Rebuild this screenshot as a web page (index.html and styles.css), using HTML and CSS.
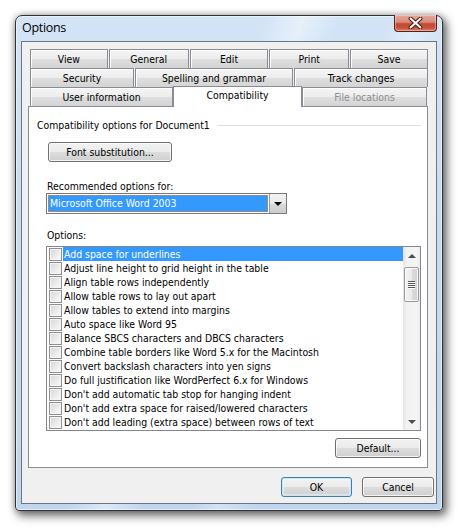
FILE: index.html
```html
<!DOCTYPE html>
<html>
<head>
<meta charset="utf-8">
<link rel="stylesheet" href="styles.css">
</head>
<body>
<div class="window">
  <div class="titlebar">
    <span class="title">Options</span>
    <div class="close">
      <svg width="17" height="12" viewBox="0 0 17 12">
        <path d="M3.5 1.5 L13.5 10.5 M13.5 1.5 L3.5 10.5" stroke="#4a1a14" stroke-width="4" stroke-linecap="round" fill="none"/>
        <path d="M3.5 1.5 L13.5 10.5 M13.5 1.5 L3.5 10.5" stroke="#ffffff" stroke-width="2" stroke-linecap="round" fill="none"/>
      </svg>
    </div>
  </div>
  <div class="client">
    <div class="tabs">
      <div class="tabrow">
        <div class="tab t-view">View</div>
        <div class="tab t-general">General</div>
        <div class="tab t-edit">Edit</div>
        <div class="tab t-print">Print</div>
        <div class="tab t-save">Save</div>
      </div>
      <div class="tabrow">
        <div class="tab t-security">Security</div>
        <div class="tab t-spelling">Spelling and grammar</div>
        <div class="tab t-track">Track changes</div>
      </div>
      <div class="tabrow">
        <div class="tab t-user">User information</div>
        <div class="tab t-compat active">Compatibility</div>
        <div class="tab t-files disabled">File locations</div>
      </div>
    </div>
    <div class="panel">
      <div class="group">
        <span class="group-label">Compatibility options for Document1</span>
        <span class="rule"></span>
      </div>
      <button class="btn btn-font">Font substitution...</button>
      <div class="label label-rec">Recommended options for:</div>
      <div class="combo">
        <div class="combo-field"><span class="combo-sel">Microsoft Office Word 2003</span></div>
        <div class="combo-btn"><span class="tri-down"></span></div>
      </div>
      <div class="label label-opt">Options:</div>
      <div class="list">
        <div class="items">
          <div class="item selected"><span class="check"></span><span class="txt">Add space for underlines</span></div>
          <div class="item"><span class="check"></span><span class="txt">Adjust line height to grid height in the table</span></div>
          <div class="item"><span class="check"></span><span class="txt">Align table rows independently</span></div>
          <div class="item"><span class="check"></span><span class="txt">Allow table rows to lay out apart</span></div>
          <div class="item"><span class="check"></span><span class="txt">Allow tables to extend into margins</span></div>
          <div class="item"><span class="check"></span><span class="txt">Auto space like Word 95</span></div>
          <div class="item"><span class="check"></span><span class="txt">Balance SBCS characters and DBCS characters</span></div>
          <div class="item"><span class="check"></span><span class="txt">Combine table borders like Word 5.x for the Macintosh</span></div>
          <div class="item"><span class="check"></span><span class="txt">Convert backslash characters into yen signs</span></div>
          <div class="item"><span class="check"></span><span class="txt">Do full justification like WordPerfect 6.x for Windows</span></div>
          <div class="item"><span class="check"></span><span class="txt">Don't add automatic tab stop for hanging indent</span></div>
          <div class="item"><span class="check"></span><span class="txt">Don't add extra space for raised/lowered characters</span></div>
          <div class="item"><span class="check"></span><span class="txt">Don't add leading (extra space) between rows of text</span></div>
        </div>
        <div class="scrollbar">
          <div class="sb-arrow"><span class="sb-up"></span></div>
          <div class="sb-track">
            <div class="sb-thumb"><span class="grip"></span><span class="grip"></span><span class="grip"></span><span class="grip"></span></div>
          </div>
          <div class="sb-arrow"><span class="sb-down"></span></div>
        </div>
      </div>
      <div class="default-row"><button class="btn btn-default">Default...</button></div>
    </div>
    <div class="footer">
      <button class="btn btn-ok">OK</button>
      <button class="btn btn-cancel">Cancel</button>
    </div>
  </div>
</div>
</body>
</html>
```

FILE: styles.css
```css
html, body {
  margin: 0;
  padding: 0;
  background: #ffffff;
}
body {
  font-family: "DejaVu Sans Condensed", "Liberation Sans", Arial, sans-serif;
  font-size: 10.4px;
  color: #000;
  width: 462px;
  height: 530px;
  overflow: hidden;
}
.window {
  margin: 15px 0 0 15px;
  width: 428px;
  height: 496px;
  box-sizing: border-box;
  border: 1px solid #2f3338;
  border-radius: 7px 7px 4px 4px;
  background:
    linear-gradient(112deg, rgba(255,255,255,0) 0%, rgba(255,255,255,0) 40%, rgba(255,255,255,.45) 46%, rgba(255,255,255,0) 52%, rgba(255,255,255,0) 60%, rgba(255,255,255,.3) 64%, rgba(255,255,255,0) 70%),
    linear-gradient(180deg, #d3e4f7 0%, #c8dcf1 40%, #c0d6ee 100%);
  box-shadow: 3px 4px 10px 1px rgba(0,0,0,0.55), 0 0 6px rgba(0,0,0,0.25), inset 0 0 0 1px rgba(255,255,255,0.55);
  padding: 0 5px 6px 5px;
  display: flex;
  flex-direction: column;
}
.titlebar {
  height: 25px;
  display: flex;
  align-items: flex-start;
  justify-content: space-between;
}
.title {
  font-family: "Open Sans", "Noto Sans", sans-serif;
  font-size: 12.5px;
  letter-spacing: -0.3px;
  color: #000;
  margin: 3px 0 0 1px;
  line-height: 17px;
}
.close {
  margin-top: -1px;
  width: 43px;
  height: 17px;
  box-sizing: border-box;
  border: 1px solid #5b1f18;
  border-top: none;
  border-radius: 0 0 4px 4px;
  background: linear-gradient(180deg, #e6a89b 0%, #d98b79 45%, #c24a33 55%, #c8523a 80%, #d9836c 100%);
  box-shadow: inset 0 0 0 1px rgba(255,255,255,0.35);
  display: flex;
  align-items: center;
  justify-content: center;
}
.close svg { display: block; }
.client {
  height: 463px;
  box-sizing: border-box;
  border: 1px solid #6d7580;
  background: #f0f0f0;
  padding: 7px 0 0 6px;
  display: flex;
  flex-direction: column;
}
.tabs {
  width: 400px;
  display: flex;
  flex-direction: column;
  position: relative;
  z-index: 2;
}
.tabrow {
  height: 19px;
  display: flex;
  align-items: flex-end;
  padding-left: 2px;
}
.tab {
  box-sizing: border-box;
  height: 19px;
  border: 1px solid #898c95;
  border-bottom: none;
  background: linear-gradient(180deg, #f5f5f5 0%, #ececec 50%, #dedede 51%, #d4d4d4 100%);
  box-shadow: inset 1px 1px 0 #ffffff;
  text-align: center;
  line-height: 18px;
  margin-right: 1px;
  white-space: nowrap;
}
.tab:last-child { margin-right: 0; }
.t-view { width: 78px; }
.t-general { width: 80px; }
.t-edit { width: 79px; }
.t-print { width: 80px; }
.t-save { width: 78px; }
.t-security { width: 104px; }
.t-spelling { width: 158px; }
.t-track { width: 134px; }
.t-user { width: 143px; margin-right: 0; }
.t-compat {
  width: 129px;
  margin-right: 0;
}
.t-files { width: 125px; }
.tab.active {
  height: 21px;
  margin-bottom: -1px;
  background: #ffffff;
  box-shadow: none;
  line-height: 17px;
  position: relative;
  z-index: 3;
}
.tab.disabled { color: #8d8d8d; }
.panel {
  width: 400px;
  height: 362px;
  box-sizing: border-box;
  border: 1px solid #898c95;
  background: #ffffff;
  padding: 0 6px 0 8px;
  display: flex;
  flex-direction: column;
  align-items: flex-start;
}
.group {
  margin-top: 12px;
  width: 100%;
  display: flex;
  align-items: center;
  height: 13px;
  line-height: 13px;
}
.group-label { white-space: nowrap; }
.rule {
  flex: 1;
  height: 1px;
  background: #d5dfe5;
  margin-left: 8px;
  margin-top: -1px;
}
.btn {
  font-family: inherit;
  font-size: 10.4px;
  color: #000;
  box-sizing: border-box;
  height: 20px;
  padding: 0;
  border: 1px solid #707070;
  border-radius: 3px;
  background: linear-gradient(180deg, #f2f2f2 0%, #ebebeb 50%, #dddddd 51%, #cfcfcf 100%);
  box-shadow: inset 0 0 0 1px rgba(255,255,255,0.75);
  line-height: 17px;
  text-align: center;
}
.btn-font {
  margin: 10px 0 0 11px;
  width: 124px;
}
.label {
  line-height: 13px;
  margin-left: 10px;
}
.label-rec { margin-top: 18px; }
.label-opt { margin-top: 15px; }
.combo {
  margin-left: 9px;
  width: 241px;
  height: 21px;
  box-sizing: border-box;
  border: 1px solid #7a7a7a;
  background: #fff;
  display: flex;
}
.combo-field {
  flex: 1;
  padding: 1px;
  display: flex;
}
.combo-sel {
  flex: 1;
  background: #3399ff;
  color: #fff;
  outline: 1px dotted #e8851c;
  outline-offset: -1px;
  line-height: 17px;
  padding-left: 2px;
}
.combo-btn {
  width: 17px;
  box-sizing: border-box;
  border-left: 1px solid #9a9a9a;
  background: linear-gradient(180deg, #f3f3f3 0%, #e8e8e8 50%, #d9d9d9 51%, #cdcdcd 100%);
  display: flex;
  align-items: center;
  justify-content: center;
}
.tri-down {
  width: 0;
  height: 0;
  border-left: 4px solid transparent;
  border-right: 4px solid transparent;
  border-top: 4px solid #000;
  margin-top: 1px;
}
.list {
  margin: 4px 0 0 9px;
  width: 375px;
  height: 185px;
  box-sizing: border-box;
  border: 1px solid #828790;
  background: #fff;
  display: flex;
}
.items {
  flex: 1;
  padding-top: 0;
  overflow: hidden;
}
.item {
  height: 14px;
  display: flex;
  align-items: center;
  white-space: nowrap;
}
.check {
  width: 13px;
  height: 13px;
  box-sizing: border-box;
  border: 1px solid #8f8f8f;
  background: linear-gradient(135deg, #d6d6d6 0%, #e9e9e9 50%, #fbfbfb 100%);
  box-shadow: inset 0 0 0 1px #f4f4f4;
  margin-left: 2px;
  flex: none;
}
.txt {
  flex: 1;
  margin-left: 1px;
  padding-left: 1px;
  line-height: 14px;
  height: 14px;
}
.item.selected .txt {
  background: #3399ff;
  color: #fff;
}
.scrollbar {
  width: 17px;
  display: flex;
  flex-direction: column;
  background: linear-gradient(90deg, #e3e3e3 0%, #f2f2f2 20%, #f4f4f4 80%, #ececec 100%);
}
.sb-arrow {
  height: 17px;
  display: flex;
  align-items: center;
  justify-content: center;
}
.sb-up {
  width: 0; height: 0;
  border-left: 4px solid transparent;
  border-right: 4px solid transparent;
  border-bottom: 4px solid #4d4d4d;
}
.sb-down {
  width: 0; height: 0;
  border-left: 4px solid transparent;
  border-right: 4px solid transparent;
  border-top: 4px solid #4d4d4d;
}
.sb-track {
  flex: 1;
  padding: 3px 1px 0 1px;
}
.sb-thumb {
  height: 35px;
  box-sizing: border-box;
  border: 1px solid #9a9a9a;
  border-radius: 2px;
  background: linear-gradient(90deg, #f3f3f3 0%, #ebebeb 50%, #dcdcdc 51%, #d2d2d2 100%);
  box-shadow: inset 0 0 0 1px rgba(255,255,255,0.8);
  display: flex;
  flex-direction: column;
  align-items: center;
  justify-content: center;
  gap: 1px;
}
.grip {
  width: 7px;
  height: 1px;
  background: #555;
  box-shadow: 0 1px 0 #fff;
}
.default-row {
  width: 100%;
  display: flex;
  justify-content: flex-end;
  margin-top: 7px;
}
.btn-default {
  width: 86px;
  margin-right: 0;
}
.footer {
  display: flex;
  justify-content: flex-end;
  gap: 10px;
  padding-right: 7px;
  margin-top: 9px;
  width: 406px;
}
.btn-ok {
  width: 71px;
  border-color: #3c7fb1;
  box-shadow: inset 0 0 0 1px #c8e6f8, inset 0 0 0 2px rgba(255,255,255,0.4);
}
.btn-cancel { width: 72px; }
```
